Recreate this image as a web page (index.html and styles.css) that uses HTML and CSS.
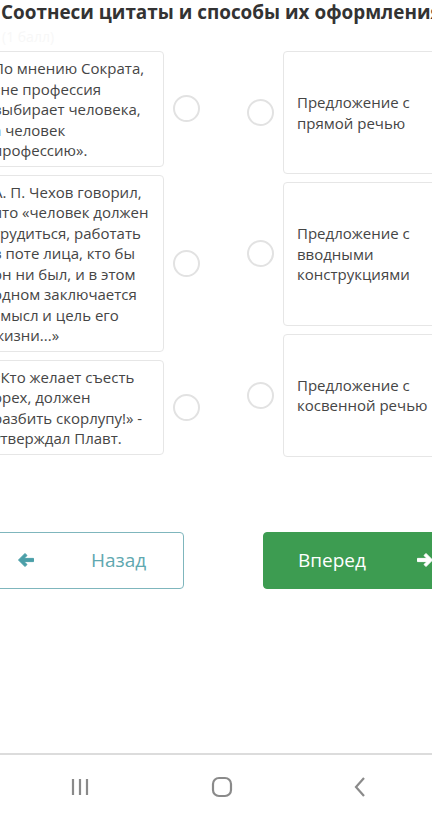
FILE: index.html
```html
<!DOCTYPE html>
<html lang="ru">
<head>
    <meta charset="UTF-8">
    <meta name="viewport" content="width=device-width, initial-scale=1.0">
    <title>Соотнеси цитаты</title>
    <link rel="stylesheet" href="styles.css">
</head>
<body>
    <div class="screen">
        <main class="content">
            <h1 class="title">Соотнеси цитаты и способы их оформления</h1>
            <div class="points">(1 балл)</div>

            <div class="match">
                <div class="match-col">
                    <div class="left-item">
                        <div class="card quote">По мнению Сократа, «не профессия выбирает человека, а человек профессию».</div>
                        <div class="radio-cell"><span class="radio"></span></div>
                    </div>
                    <div class="left-item">
                        <div class="card quote">А. П. Чехов говорил, что «человек должен трудиться, работать в поте лица, кто бы он ни был, и в этом одном заключается смысл и цель его жизни...»</div>
                        <div class="radio-cell"><span class="radio"></span></div>
                    </div>
                    <div class="left-item">
                        <div class="card quote">«Кто желает съесть орех, должен разбить скорлупу!» - утверждал Плавт.</div>
                        <div class="radio-cell"><span class="radio"></span></div>
                    </div>
                </div>

                <div class="match-col">
                    <div class="right-item">
                        <div class="radio-cell"><span class="radio"></span></div>
                        <div class="card answer">Предложение с прямой речью</div>
                    </div>
                    <div class="right-item">
                        <div class="radio-cell"><span class="radio"></span></div>
                        <div class="card answer">Предложение с вводными конструкциями</div>
                    </div>
                    <div class="right-item">
                        <div class="radio-cell"><span class="radio"></span></div>
                        <div class="card answer">Предложение с косвенной речью</div>
                    </div>
                </div>
            </div>

            <div class="nav-buttons">
                <button class="btn btn-back">
                    <svg class="arrow" width="18" height="16" viewBox="0 0 18 16">
                        <path d="M8 1.5 L1.5 8 L8 14.5 L10 12.5 L7 9.6 H16.5 V6.4 H7 L10 3.5 Z" fill="currentColor" stroke="currentColor" stroke-width="1" stroke-linejoin="round"/>
                    </svg>
                    <span class="btn-label">Назад</span>
                </button>
                <button class="btn btn-next">
                    <span class="btn-label">Вперед</span>
                    <svg class="arrow" width="18" height="16" viewBox="0 0 18 16">
                        <path d="M10 1.5 L16.5 8 L10 14.5 L8 12.5 L11 9.6 H1.5 V6.4 H11 L8 3.5 Z" fill="currentColor" stroke="currentColor" stroke-width="1" stroke-linejoin="round"/>
                    </svg>
                </button>
            </div>
        </main>

        <nav class="system-bar">
            <svg width="20" height="18" viewBox="0 0 20 18">
                <path d="M3 1 V17 M10 1 V17 M17 1 V17" stroke="#8a8a8a" stroke-width="2.2" fill="none"/>
            </svg>
            <svg width="22" height="22" viewBox="0 0 22 22">
                <rect x="2" y="2" width="18" height="18" rx="6" stroke="#8a8a8a" stroke-width="2.2" fill="none"/>
            </svg>
            <svg width="14" height="22" viewBox="0 0 14 22">
                <path d="M11 2 L3 11 L11 20" stroke="#8a8a8a" stroke-width="2.2" fill="none"/>
            </svg>
        </nav>
    </div>
</body>
</html>
```

FILE: styles.css
```css
body {
    margin: 0;
    font-family: "Open Sans", "Noto Sans", sans-serif;
    background: #fff;
    color: #444;
}
.screen {
    width: 432px;
    height: 818px;
    overflow: hidden;
    display: flex;
    flex-direction: column;
}
.content {
    flex: 1;
}
.title {
    margin: 0 0 0 1px;
    font-size: 18.9px;
    line-height: 24px;
    font-weight: 700;
    color: #333;
    white-space: nowrap;
}
.points {
    margin: 3px 0 0 2px;
    font-size: 14px;
    line-height: 20px;
    color: #f7f7f7;
}
.match {
    display: flex;
    align-items: flex-start;
    gap: 30px;
    margin: 4px 0 0 -20px;
}
.match-col {
    display: flex;
    flex-direction: column;
    gap: 8px;
    flex-shrink: 0;
}
.left-item, .right-item {
    display: flex;
    align-items: center;
}
.card {
    box-sizing: border-box;
    flex-shrink: 0;
    border: 1px solid #e6e6e6;
    border-radius: 4px;
    background: #fff;
    font-size: 15px;
    line-height: 20.5px;
    color: #454545;
}
.quote {
    width: 184px;
    padding: 6px 14px 5px 12px;
}
.answer {
    width: 180px;
    min-height: 122px;
    padding: 40px 10px 40px 13px;
}
.left-item .radio-cell {
    width: 44px;
}
.right-item .radio-cell {
    width: 45px;
}
.radio-cell {
    display: flex;
    justify-content: center;
    flex-shrink: 0;
}
.radio {
    width: 23px;
    height: 23px;
    border: 2px solid #e2e2e2;
    border-radius: 50%;
}
.nav-buttons {
    display: flex;
    gap: 79px;
    margin: 75px 0 0 -20px;
}
.btn {
    box-sizing: border-box;
    flex-shrink: 0;
    height: 57px;
    border-radius: 4px;
    font-family: "Open Sans", "Noto Sans", sans-serif;
    font-size: 19px;
    display: flex;
    align-items: center;
    padding: 0;
    cursor: pointer;
}
.btn-back {
    width: 204px;
    background: #fff;
    border: 1px solid #7fb6bd;
    color: #5fa8b0;
}
.btn-back .arrow {
    margin-left: 36px;
    color: #4b9fa8;
}
.btn-back .btn-label {
    margin-left: 56px;
}
.btn-next {
    width: 200px;
    background: #3d9c51;
    border: 1px solid #3d9c51;
    color: #fff;
}
.btn-next .btn-label {
    margin-left: 34px;
}
.btn-next .arrow {
    margin-left: 50px;
}
.system-bar {
    height: 63px;
    border-top: 2px solid #dcdcdc;
    display: flex;
    align-items: center;
    justify-content: space-between;
    padding: 0 65px 0 70px;
}
```
